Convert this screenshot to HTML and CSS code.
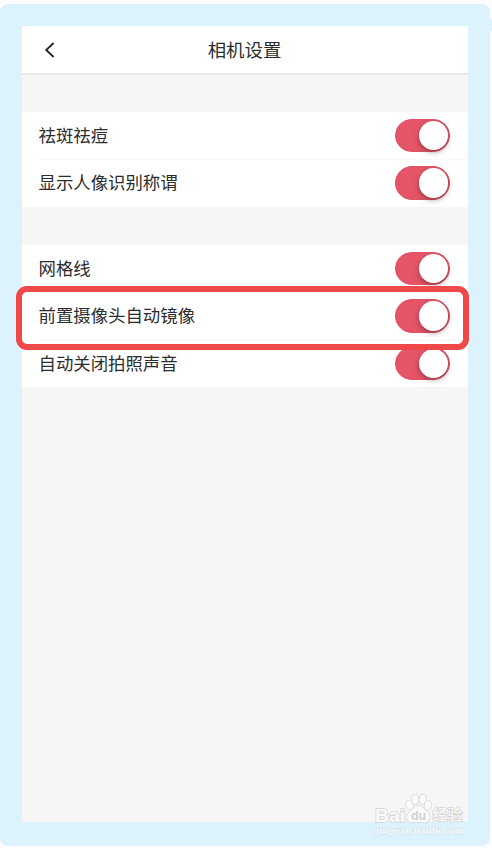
FILE: index.html
```
<!DOCTYPE html>
<html lang="zh-CN">
<head>
    <meta charset="UTF-8">
    <meta name="viewport" content="width=device-width, initial-scale=1.0">
    <title>相机设置</title>
    <link rel="stylesheet" href="styles.css">
</head>
<body>
    <div class="frame">
        <div class="screen">
            <header class="header">
                <button class="back-btn" aria-label="返回">
                    <svg width="11" height="16" viewBox="0 0 11 16">
                        <path d="M9.6 1 L2.2 8 L9.6 15" fill="none" stroke="#222" stroke-width="1.8"/>
                    </svg>
                </button>
                <h1 class="title">相机设置</h1>
            </header>

            <div class="group">
                <div class="row">
                    <span class="label">祛斑祛痘</span>
                    <span class="switch"><span class="knob"></span></span>
                </div>
                <div class="row">
                    <span class="label">显示人像识别称谓</span>
                    <span class="switch"><span class="knob"></span></span>
                </div>
            </div>

            <div class="group">
                <div class="row">
                    <span class="label">网格线</span>
                    <span class="switch"><span class="knob"></span></span>
                </div>
                <div class="row">
                    <span class="label">前置摄像头自动镜像</span>
                    <span class="switch"><span class="knob"></span></span>
                    <div class="highlight"></div>
                </div>
                <div class="row">
                    <span class="label">自动关闭拍照声音</span>
                    <span class="switch"><span class="knob"></span></span>
                </div>
            </div>
        </div>

        <div class="edge-tab"></div>

        <svg class="watermark" width="94" height="48" viewBox="0 0 94 48">
            <g class="mark">
                <text class="brand" x="1" y="29.5" textLength="30" lengthAdjust="spacingAndGlyphs">Bai</text>
                <ellipse cx="35.5" cy="13" rx="3.3" ry="4.4" transform="rotate(-15 35.5 13)"/>
                <ellipse cx="41" cy="7.2" rx="3.5" ry="4.8"/>
                <ellipse cx="48.7" cy="7.2" rx="3.5" ry="4.8" transform="rotate(8 48.7 7.2)"/>
                <ellipse cx="54" cy="13.5" rx="3.3" ry="4.4" transform="rotate(15 54 13.5)"/>
                <path d="M44.5 13.5 C48.5 13.5 50 17 52.5 19 C57 22.5 57 29 52 30.3 C49 31 47.5 30 44.5 30 C41.500 30 39.5 31 36.5 30.3 C31.5 29 32 22.5 36.5 19 C39 17 40.5 13.5 44.5 13.5 Z"/>
                <text class="du" x="37" y="28" textLength="15" lengthAdjust="spacingAndGlyphs">du</text>
                <text class="cn" x="58.5" y="28" textLength="30" lengthAdjust="spacingAndGlyphs">经验</text>
                <text class="site" x="1.5" y="42" textLength="88" lengthAdjust="spacingAndGlyphs">jingyan.baidu.com</text>
            </g>
        </svg>
    </div>
</body>
</html>
```
FILE: styles.css
```
* {
    margin: 0;
    padding: 0;
    box-sizing: border-box;
}

body {
    font-family: 'Noto Sans CJK SC', sans-serif;
    background: #fdfdfd;
    color: #2c2d2f;
    padding-top: 4px;
    height: 848px;
    overflow: hidden;
}

.frame {
    position: relative;
    width: 490px;
    height: 842px;
    padding: 22px;
    background: #dcf2fd;
    border-radius: 8px;
}

.screen {
    width: 446px;
    height: 796px;
    background: #f6f6f6;
}

.header {
    display: flex;
    align-items: center;
    height: 49px;
    padding: 0 22px;
    background: #fff;
    border-bottom: 2px solid #e8e8e8;
}

.back-btn {
    display: flex;
    width: 30px;
    background: none;
    border: none;
    cursor: pointer;
}

.title {
    flex: 1;
    margin-right: 31px;
    padding-bottom: 2px;
    text-align: center;
    font-size: 18.4px;
    font-weight: 400;
    line-height: 26px;
}

.group {
    margin-top: 37px;
    background: #fff;
}

.group + .group {
    margin-top: 38px;
}

.row {
    position: relative;
    display: flex;
    align-items: center;
    justify-content: space-between;
    height: 47.4px;
    padding: 0 17.6px 0 16.5px;
}

/* Inset divider between rows */
.row + .row {
    background: linear-gradient(#f7f7f7, #f7f7f7) no-repeat 16px 0 / 100% 1px;
}

.label {
    padding-bottom: 1.4px;
    font-size: 17.4px;
    line-height: 26px;
}

.switch {
    display: flex;
    align-items: center;
    justify-content: flex-end;
    width: 55px;
    height: 33.5px;
    padding: 0 2px;
    background: #e35567;
    border: 1px solid #db5165;
    border-radius: 17px;
}

.knob {
    width: 29.5px;
    height: 29.5px;
    margin-right: -1px;
    background: #fff;
    border-radius: 50%;
    box-shadow: 0 2px 4px rgba(60, 0, 10, 0.32), 0 3px 8px rgba(0, 0, 0, 0.08);
}

.highlight {
    position: absolute;
    z-index: 1;
    left: -6px;
    top: -6.4px;
    width: 453px;
    height: 64px;
    border: 6px solid #ee4848;
    border-radius: 11px;
}

.edge-tab {
    position: absolute;
    left: 490px;
    top: 15px;
    width: 2px;
    height: 12px;
    background: #dcf2fd;
}

.watermark {
    position: absolute;
    left: 374px;
    top: 788px;
}

.mark {
    fill: #fafafa;
    stroke: #d4d4d4;
    stroke-width: 1.4;
    paint-order: stroke;
}

.brand {
    font: bold 19px 'Liberation Sans', sans-serif;
}

.du {
    font: bold 13px 'Liberation Sans', sans-serif;
    fill: #d0d0d0;
    stroke: none;
}

.cn {
    font: 500 15px 'Noto Sans CJK SC', sans-serif;
}

.site {
    font: bold 10.5px 'Liberation Serif', serif;
    fill: #f4fafd;
    stroke: #cfdfe7;
    stroke-width: 0.8;
}
```
